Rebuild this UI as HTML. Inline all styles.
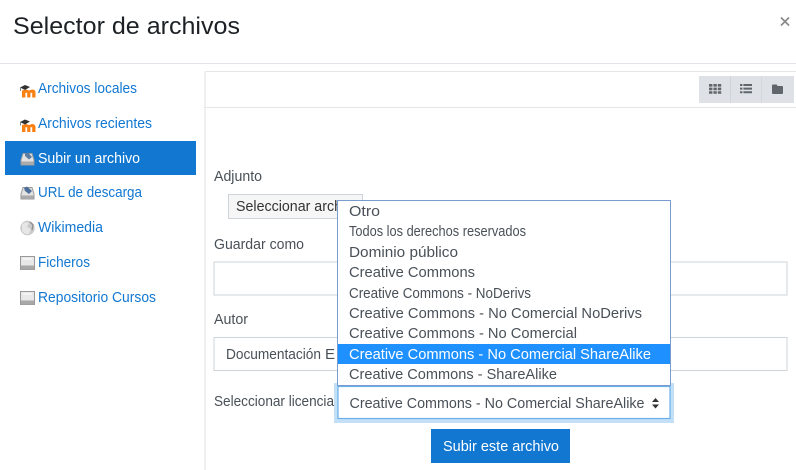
<!DOCTYPE html>
<html><head><meta charset="utf-8"><style>
html,body{margin:0;padding:0;background:#fff;width:796px;height:470px;overflow:hidden}
svg{display:block}
text{font-family:"Liberation Sans",sans-serif;font-size:15px;fill:#495057}
.l{fill:#1177d1}
</style></head><body>
<svg width="796" height="470" viewBox="0 0 796 470" xmlns="http://www.w3.org/2000/svg">
<defs>
<g id="m">
<path d="M2 12.5V5.5L6 4.5L9 5.5L12 4.5Q15.5 4.5 15.5 7.5V12.5H12.2V7.8H10.4V12.5H7.2V7.8H5.4V12.5Z" fill="#f98012"/>
<path d="M0 2.5L5 0L10 2L5 5Z" fill="#333"/>
<path d="M.6 2.5V6" stroke="#555" stroke-width=".7" fill="none"/>
</g>
<g id="drive">
<path d="M1 8L3 1.5H12L14 8V13H1Z" fill="#e2e2e2" stroke="#999" stroke-width="1"/>
<rect x="1.5" y="9.5" width="12" height="3.5" fill="#aaa"/>
</g>
<g id="box">
<rect x=".5" y=".5" width="14" height="13" fill="#e8e8e8" stroke="#999"/>
<rect x="1" y="9.5" width="13" height="4" fill="#a8a8a8"/>
<path d="M3 3H12" stroke="#fff" stroke-width="1"/>
</g>
</defs>

<text x="13" y="34" style="font-size:24px;fill:#1d2125" textLength="227" lengthAdjust="spacingAndGlyphs">Selector de archivos</text>
<path d="M781 17.5L789 25.5M789 17.5L781 25.5" stroke="#8a8a8a" stroke-width="1.7" fill="none"/>
<rect x="0" y="63" width="796" height="1" fill="#e1e4e8"/>

<!-- sidebar -->
<rect x="5" y="141" width="191" height="34" fill="#1177d1"/>
<use href="#m" x="20" y="85"/>
<use href="#m" x="20" y="119.5"/>
<text class="l" x="38" y="93" textLength="99" lengthAdjust="spacingAndGlyphs">Archivos locales</text>
<text class="l" x="38" y="128" textLength="114" lengthAdjust="spacingAndGlyphs">Archivos recientes</text>
<g transform="translate(20,152)"><use href="#drive"/><path d="M5 1.5L8 0.5L12 5L9 7.5L5 4Z" fill="#5b7da3"/></g>
<text x="38" y="163" style="fill:#fff" textLength="102" lengthAdjust="spacingAndGlyphs">Subir un archivo</text>
<g transform="translate(20,186)"><use href="#drive"/><path d="M4 2L7 0.5L12 5L9 8L5 5Z" fill="#4d6f99"/></g>
<text class="l" x="38" y="197" textLength="104" lengthAdjust="spacingAndGlyphs">URL de descarga</text>
<circle cx="27.5" cy="228" r="7.2" fill="#c9c9c9"/><path d="M22 224Q26 221 29 223L27 227L31 229L29 234Q25 235 22 231Z" fill="#e6e6e6"/><path d="M30 222L33 225L32 230" stroke="#8c8c8c" stroke-width="1.2" fill="none"/>
<text class="l" x="38" y="232" textLength="65" lengthAdjust="spacingAndGlyphs">Wikimedia</text>
<use href="#box" x="20" y="256"/>
<text class="l" x="38" y="267" textLength="52" lengthAdjust="spacingAndGlyphs">Ficheros</text>
<use href="#box" x="20" y="291"/>
<text class="l" x="38" y="302" textLength="118" lengthAdjust="spacingAndGlyphs">Repositorio Cursos</text>

<!-- content frame -->
<rect x="204" y="71" width="592" height="1" fill="#e4e6e9"/>
<rect x="204" y="71" width="2" height="399" fill="#eef0f2"/>
<rect x="204" y="107" width="592" height="1" fill="#e4e6e9"/>
<rect x="699" y="76" width="95" height="27" fill="#dee2e6"/>
<rect x="730" y="76" width="1" height="27" fill="#cfd4d9"/>
<rect x="761" y="76" width="1" height="27" fill="#d3d8dc"/>
<g fill="#60666c">
<path d="M709 84h3.4v2.6h-3.4zM713.4 84h3.4v2.6h-3.4zM717.8 84h3.4v2.6h-3.4zM709 87.6h3.4v2.6h-3.4zM713.4 87.6h3.4v2.6h-3.4zM717.8 87.6h3.4v2.6h-3.4zM709 91.2h3.4v2.6h-3.4zM713.4 91.2h3.4v2.6h-3.4zM717.8 91.2h3.4v2.6h-3.4z"/>
<path d="M740 84h2.4v2h-2.4zM743.4 84h8.6v2h-8.6zM740 87.6h2.4v2h-2.4zM743.4 87.6h8.6v2h-8.6zM740 91.2h2.4v2h-2.4zM743.4 91.2h8.6v2h-8.6z"/>
<path d="M772 85.5q0-1 1-1h3.5l1.2 1.5h4.3q1 0 1 1v6q0 1-1 1h-9q-1 0-1-1z"/>
</g>

<!-- form -->
<text x="214" y="181" textLength="48" lengthAdjust="spacingAndGlyphs">Adjunto</text>
<rect x="228.5" y="194.5" width="134" height="24" fill="#f6f6f6" stroke="#ced4da"/>
<text x="236" y="211" style="fill:#333" textLength="106" lengthAdjust="spacingAndGlyphs">Seleccionar arch</text>
<text x="214" y="249" textLength="90" lengthAdjust="spacingAndGlyphs">Guardar como</text>
<rect x="214" y="262" width="573" height="33" fill="#fff" stroke="#ced4da"/>
<text x="214" y="324" textLength="34" lengthAdjust="spacingAndGlyphs">Autor</text>
<rect x="214" y="337.5" width="573" height="33" fill="#fff" stroke="#ced4da"/>
<text x="226" y="359" textLength="95" lengthAdjust="spacingAndGlyphs">Documentación</text>
<text x="325" y="359">E</text>
<text x="214" y="406" textLength="120" lengthAdjust="spacingAndGlyphs">Seleccionar licencia</text>

<!-- select -->
<rect x="334" y="383" width="340" height="40" fill="#c4e0f7"/>
<rect x="338" y="386.5" width="332" height="32" fill="#fff" stroke="#6aaeea" stroke-width="1.2"/>
<text x="349.5" y="408" textLength="295" lengthAdjust="spacingAndGlyphs">Creative Commons - No Comercial ShareAlike</text>
<path d="M652 402L655.5 398L659 402ZM652 404.5L655.5 408.5L659 404.5Z" fill="#333"/>

<!-- dropdown -->
<rect x="337.5" y="200.5" width="333" height="185" fill="#fff" stroke="#7a9bd0"/>
<rect x="338" y="344" width="332" height="20" fill="#1e90ff"/>
<text x="349" y="216" textLength="31" lengthAdjust="spacingAndGlyphs">Otro</text>
<text x="349" y="236" textLength="177" lengthAdjust="spacingAndGlyphs">Todos los derechos reservados</text>
<text x="349" y="257" textLength="109" lengthAdjust="spacingAndGlyphs">Dominio público</text>
<text x="349" y="277" textLength="126" lengthAdjust="spacingAndGlyphs">Creative Commons</text>
<text x="349" y="298" textLength="182" lengthAdjust="spacingAndGlyphs">Creative Commons - NoDerivs</text>
<text x="349" y="318" textLength="293" lengthAdjust="spacingAndGlyphs">Creative Commons - No Comercial NoDerivs</text>
<text x="349" y="338" textLength="228" lengthAdjust="spacingAndGlyphs">Creative Commons - No Comercial</text>
<text x="349" y="359" style="fill:#fff" textLength="302" lengthAdjust="spacingAndGlyphs">Creative Commons - No Comercial ShareAlike</text>
<text x="349" y="379" textLength="208" lengthAdjust="spacingAndGlyphs">Creative Commons - ShareAlike</text>

<rect x="431" y="429" width="139" height="34" fill="#1177d1"/>
<text x="443" y="451" style="fill:#fff" textLength="116" lengthAdjust="spacingAndGlyphs">Subir este archivo</text>
</svg>
</body></html>
